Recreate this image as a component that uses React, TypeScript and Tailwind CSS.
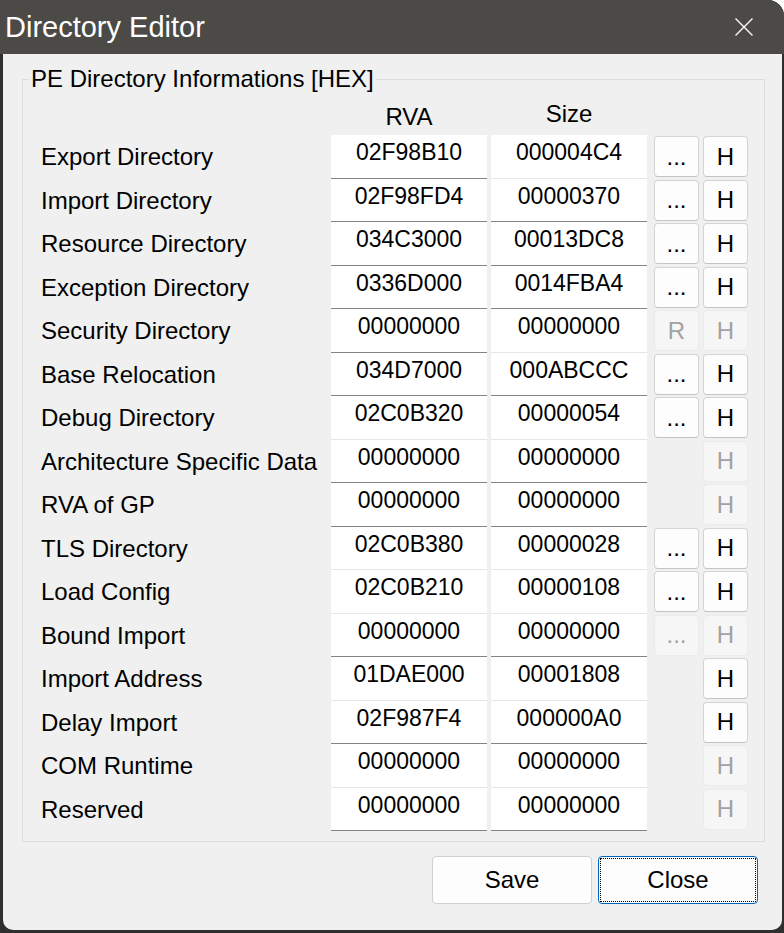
type Btn = 'dots' | 'dotsOff' | 'rOff' | 'none';

const ROWS: { label: string; rva: string; size: string; btn: Btn; h: boolean; line: [boolean, boolean] }[] = [
  { label: 'Export Directory', rva: '02F98B10', size: '000004C4', btn: 'dots', h: true, line: [true, false] },
  { label: 'Import Directory', rva: '02F98FD4', size: '00000370', btn: 'dots', h: true, line: [true, true] },
  { label: 'Resource Directory', rva: '034C3000', size: '00013DC8', btn: 'dots', h: true, line: [true, true] },
  { label: 'Exception Directory', rva: '0336D000', size: '0014FBA4', btn: 'dots', h: true, line: [true, true] },
  { label: 'Security Directory', rva: '00000000', size: '00000000', btn: 'rOff', h: false, line: [true, false] },
  { label: 'Base Relocation', rva: '034D7000', size: '000ABCCC', btn: 'dots', h: true, line: [true, true] },
  { label: 'Debug Directory', rva: '02C0B320', size: '00000054', btn: 'dots', h: true, line: [false, false] },
  { label: 'Architecture Specific Data', rva: '00000000', size: '00000000', btn: 'none', h: false, line: [true, true] },
  { label: 'RVA of GP', rva: '00000000', size: '00000000', btn: 'none', h: false, line: [true, true] },
  { label: 'TLS Directory', rva: '02C0B380', size: '00000028', btn: 'dots', h: true, line: [false, false] },
  { label: 'Load Config', rva: '02C0B210', size: '00000108', btn: 'dots', h: true, line: [false, false] },
  { label: 'Bound Import', rva: '00000000', size: '00000000', btn: 'dotsOff', h: false, line: [true, true] },
  { label: 'Import Address', rva: '01DAE000', size: '00001808', btn: 'none', h: true, line: [false, false] },
  { label: 'Delay Import', rva: '02F987F4', size: '000000A0', btn: 'none', h: true, line: [true, true] },
  { label: 'COM Runtime', rva: '00000000', size: '00000000', btn: 'none', h: false, line: [false, false] },
  { label: 'Reserved', rva: '00000000', size: '00000000', btn: 'none', h: false, line: [true, true] },
];

function HexBox({ value, dark }: { value: string; dark: boolean }) {
  return (
    <div
      className={
        'flex h-full w-[156px] justify-center bg-white pt-[3px] text-[23px] leading-[28px] ' +
        (dark ? 'border-b border-[#838383]' : 'border-b border-[#e6e6e6]')
      }
    >
      {value}
    </div>
  );
}

function SmallBtn({ text, off }: { text: string; off?: boolean }) {
  return (
    <div
      className={
        'mt-px flex h-[41px] w-[45px] items-center justify-center rounded-[4px] border leading-[28px] ' +
        (off
          ? 'border-[#ebebeb] bg-[#f6f6f6] text-[#a2a2a2]'
          : 'border-[#d4d4d4] border-b-[#c4c4c4] bg-[#fdfdfd] text-black')
      }
    >
      {text}
    </div>
  );
}

export default function App() {
  return (
    <div className="h-[933px] w-[784px] bg-white font-['Liberation_Sans',Arial,sans-serif] text-[24px] text-black">
      <div className="flex h-full flex-col rounded-tr-[16px] bg-[#2f2f2f]">
        {/* barre de titre */}
        <div className="flex h-[54px] shrink-0 items-center justify-between rounded-tr-[16px] bg-[#4b4a47] pl-[5px] pr-[31px]">
          <span className="text-[29px] leading-[32px] text-white">Directory Editor</span>
          <svg width="18" height="18" viewBox="0 0 18 18" className="mt-[-1px]">
            <path d="M0.5 0.5 L17.5 17.5 M17.5 0.5 L0.5 17.5" stroke="white" strokeWidth="1.3" fill="none" />
          </svg>
        </div>

        <div className="mb-[3px] ml-[3px] mr-[2px] flex flex-1 flex-col rounded-b-[10px] bg-[#f0f0f0]">
          <fieldset className="ml-[19px] mr-[17px] mt-[11px] border border-[#dcdcdc] pb-[10px] pl-[18px] pr-[13px]">
            <legend className="-ml-[12px] px-[2px] text-[24px] leading-[28px]">PE Directory Informations [HEX]</legend>

            <div className="mb-[4px] mt-[10px] flex h-[28px] items-start leading-[28px]">
              <div className="w-[290px]" />
              <div className="w-[156px] text-center">RVA</div>
              <div className="-mt-[3px] ml-[4px] w-[156px] text-center">Size</div>
            </div>

            {ROWS.map((r) => (
              <div key={r.label} className="flex h-[43.5px] items-start">
                <div className="w-[290px] pt-[8px] leading-[28px]">{r.label}</div>
                <HexBox value={r.rva} dark={r.line[0]} />
                <div className="ml-[4px] h-full">
                  <HexBox value={r.size} dark={r.line[1]} />
                </div>
                <div className="ml-[7px] w-[45px]">
                  {r.btn === 'dots' && <SmallBtn text="..." />}
                  {r.btn === 'dotsOff' && <SmallBtn text="..." off />}
                  {r.btn === 'rOff' && <SmallBtn text="R" off />}
                </div>
                <div className="ml-[4px]">
                  <SmallBtn text="H" off={!r.h} />
                </div>
              </div>
            ))}
          </fieldset>

          <div className="mr-[24px] mt-[14px] flex justify-end gap-[6px]">
            <div className="flex h-[48px] w-[160px] items-center justify-center rounded-[4px] border border-[#d0d0d0] bg-[#fdfdfd]">
              Save
            </div>
            <div className="flex h-[48px] w-[160px] rounded-[4px] border border-[#0067c0] bg-[#fdfdfd] p-px">
              <div className="flex flex-1 items-center justify-center border border-dotted border-black">Close</div>
            </div>
          </div>
        </div>
      </div>
    </div>
  );
}
